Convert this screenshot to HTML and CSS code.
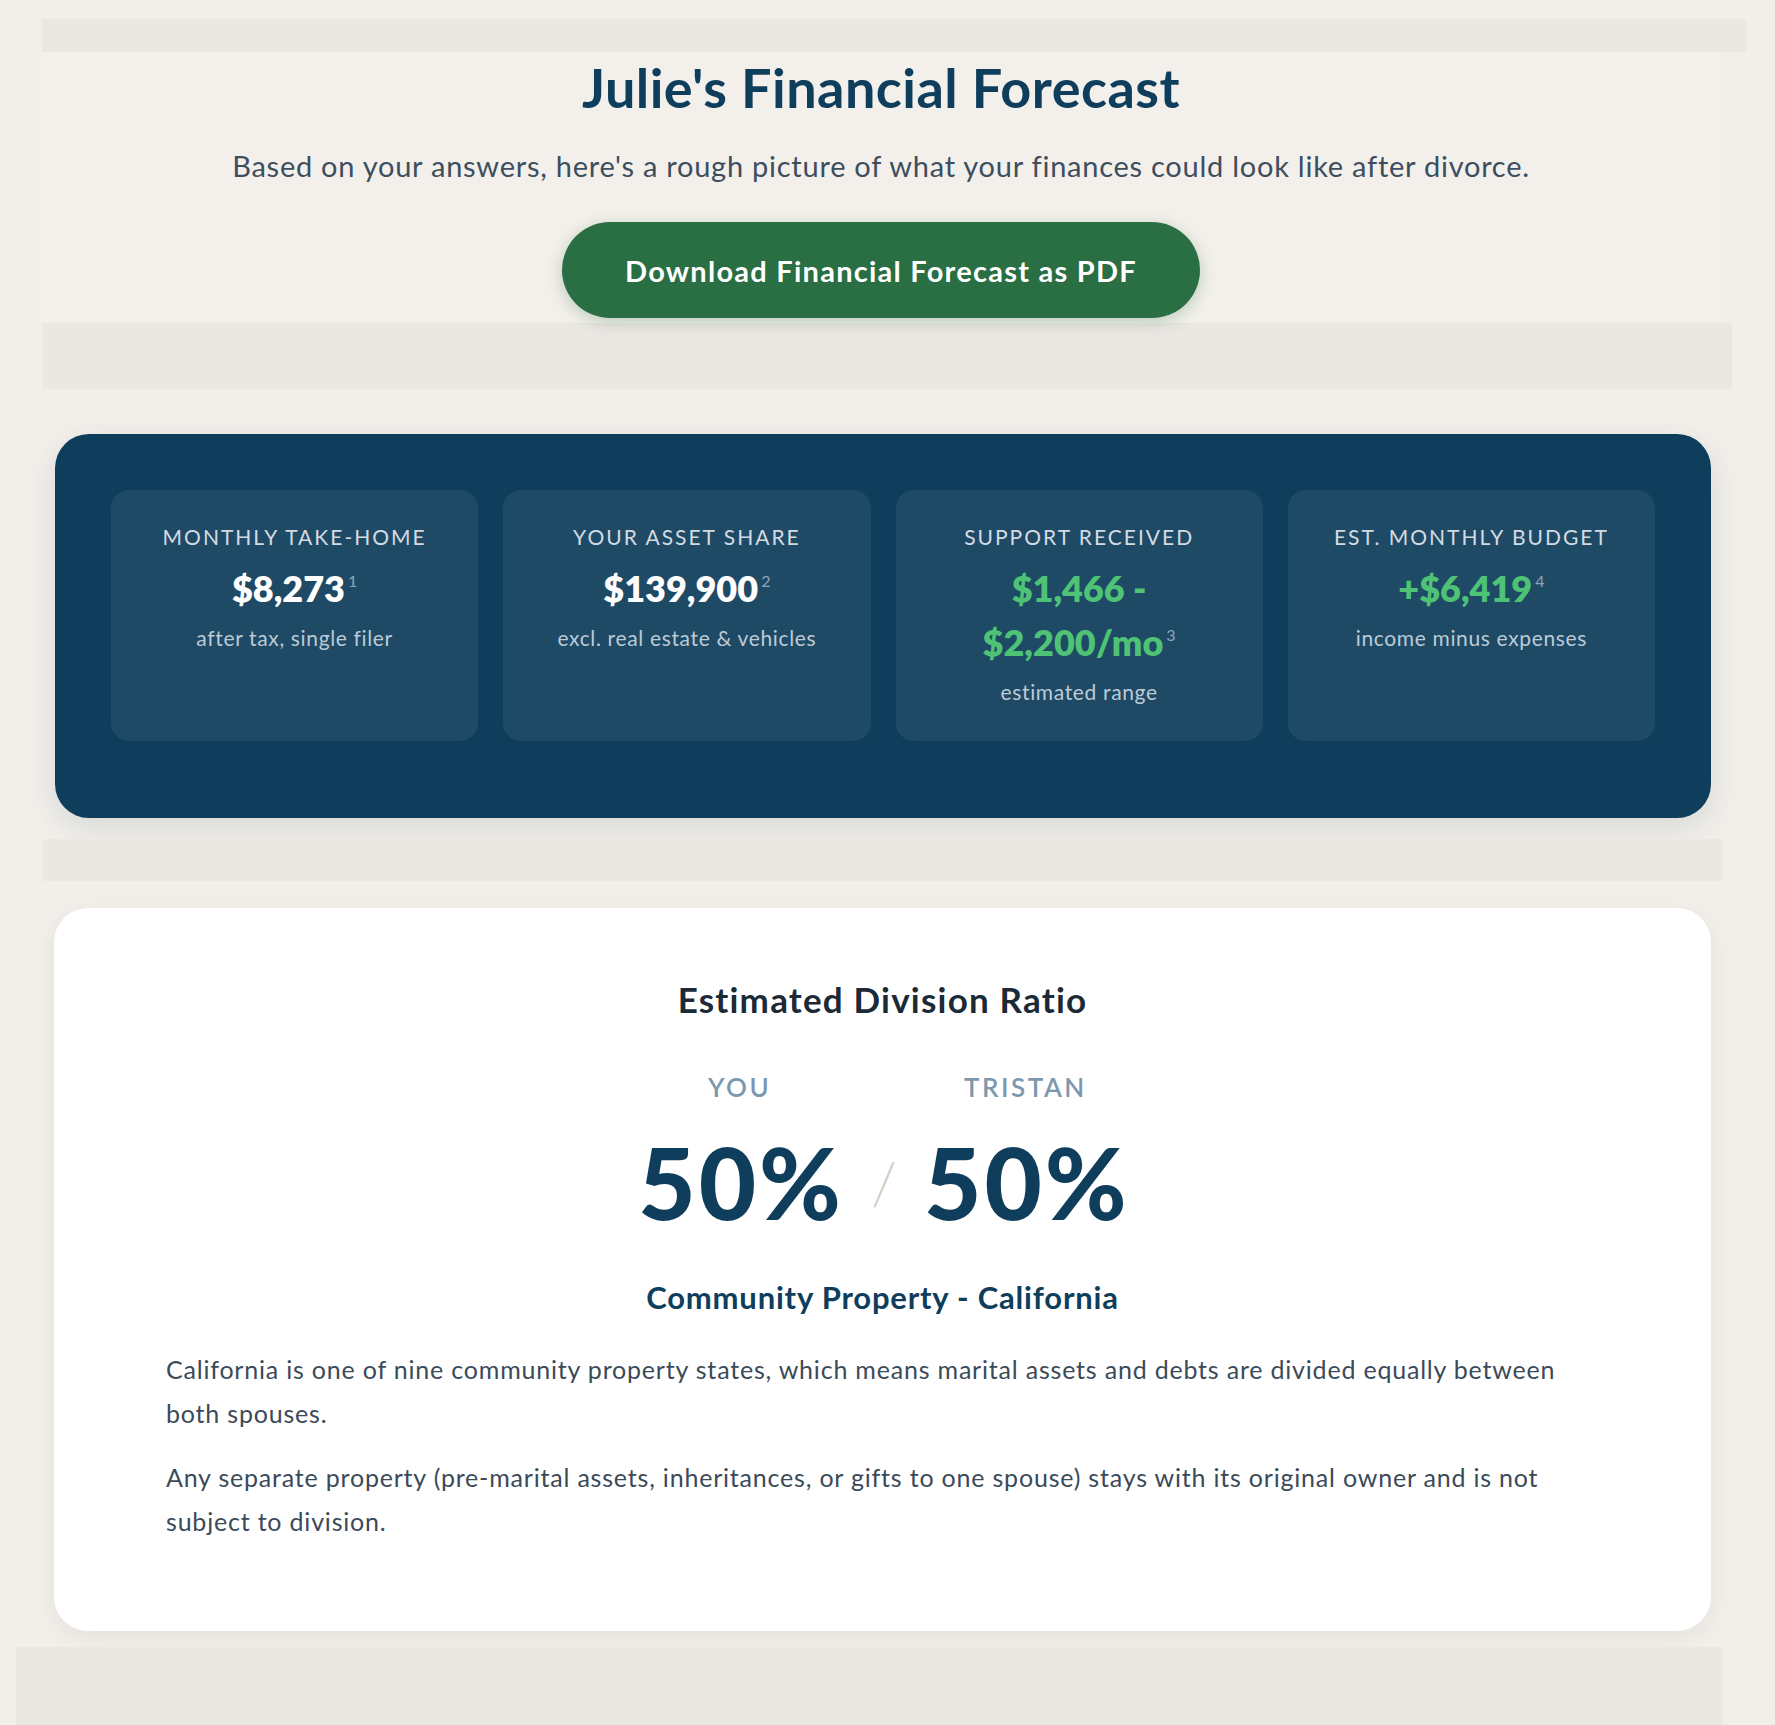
FILE: index.html
```html
<!DOCTYPE html>
<html lang="en">
<head>
<meta charset="utf-8">
<title>Julie's Financial Forecast</title>
<link rel="stylesheet" href="styles.css">
</head>
<body>
<div class="page">
  <div class="band band-top"></div>
  <header class="hero">
    <h1 class="hero-title">Julie's Financial Forecast</h1>
    <p class="hero-sub">Based on your answers, here's a rough picture of what your finances could look like after divorce.</p>
    <button class="pdf-btn" type="button">Download Financial Forecast as PDF</button>
  </header>
  <div class="band band-mid"></div>

  <section class="stats">
    <div class="stat">
      <div class="stat-label">Monthly Take-Home</div>
      <div class="stat-value">$8,273<sup class="fn">1</sup></div>
      <div class="stat-note">after tax, single filer</div>
    </div>
    <div class="stat">
      <div class="stat-label">Your Asset Share</div>
      <div class="stat-value">$139,900<sup class="fn">2</sup></div>
      <div class="stat-note">excl. real estate &amp; vehicles</div>
    </div>
    <div class="stat">
      <div class="stat-label">Support Received</div>
      <div class="stat-value stat-value--green">$1,466 -<br>$2,200/mo<sup class="fn">3</sup></div>
      <div class="stat-note">estimated range</div>
    </div>
    <div class="stat">
      <div class="stat-label">Est. Monthly Budget</div>
      <div class="stat-value stat-value--green">+$6,419<sup class="fn">4</sup></div>
      <div class="stat-note">income minus expenses</div>
    </div>
  </section>

  <div class="band band-low"></div>

  <section class="ratio-card">
    <h2 class="ratio-title">Estimated Division Ratio</h2>
    <div class="ratio-row">
      <div class="ratio-col">
        <div class="ratio-label">You</div>
        <div class="ratio-num">50%</div>
      </div>
      <div class="ratio-slash">/</div>
      <div class="ratio-col">
        <div class="ratio-label">Tristan</div>
        <div class="ratio-num">50%</div>
      </div>
    </div>
    <h3 class="ratio-rule">Community Property - California</h3>
    <div class="ratio-body">
      <p class="ratio-text">California is one of nine community property states, which means marital assets and debts are divided equally between both spouses.</p>
      <p class="ratio-text">Any separate property (pre-marital assets, inheritances, or gifts to one spouse) stays with its original owner and is not subject to division.</p>
    </div>
  </section>

  <div class="band band-bottom"></div>
</div>
</body>
</html>
```

FILE: styles.css
```css
* {
  box-sizing: border-box;
}

html, body {
  margin: 0;
  padding: 0;
}

body {
  background: #f2efea;
  font-family: "Lato", "Noto Sans", "DejaVu Sans", sans-serif;
  color: #3b4a59;
}

.page {
  width: 1775px;
  height: 1725px;
  overflow: hidden;
}

.band {
  background: #ebe7e3;
}

.band-top {
  margin: 19px 0 0 42px;
  width: 1704px;
  height: 33px;
}

.hero {
  margin-left: 43px;
  width: 1676px;
  display: flex;
  flex-direction: column;
  align-items: center;
  text-align: center;
  background: #f3f0eb;
  padding-top: 5px;
  padding-bottom: 5px;
}

.hero-title {
  margin: 0;
  font-size: 54px;
  line-height: 62px;
  font-weight: 700;
  color: #0f3d5c;
  letter-spacing: 0.45px;
}

.hero-sub {
  margin: 27px 0 0;
  font-size: 29px;
  line-height: 40px;
  letter-spacing: 0.75px;
  color: #3d4e5e;
}

.pdf-btn {
  margin-top: 36px;
  height: 96px;
  padding: 0 63px;
  border: none;
  border-radius: 48px;
  background: #2a6e43;
  color: #ffffff;
  font-family: inherit;
  font-size: 29px;
  font-weight: 700;
  letter-spacing: 1.25px;
  box-shadow: 0 4px 16px rgba(42, 110, 67, 0.28);
}

.band-mid {
  margin-left: 43px;
  width: 1689px;
  height: 66px;
}

.stats {
  margin: 45px 0 0 55px;
  width: 1656px;
  padding: 56px 56px 77px;
  background: #0f3d5c;
  border-radius: 34px;
  box-shadow: 0 10px 30px rgba(15, 61, 92, 0.12);
  display: grid;
  grid-template-columns: repeat(4, 1fr);
  gap: 25px;
}

.stat {
  background: #1f4a66;
  border-radius: 18px;
  padding: 32px 16px 34px;
  text-align: center;
  min-height: 251px;
}

.stat-label {
  font-size: 21px;
  line-height: 30px;
  letter-spacing: 2px;
  text-transform: uppercase;
  color: #d3dbe2;
}

.stat-value {
  margin-top: 9px;
  font-size: 36px;
  line-height: 54px;
  font-weight: 800;
  color: #ffffff;
}

.stat-value--green {
  color: #4ec375;
}

.fn {
  font-size: 16px;
  font-weight: 400;
  color: #8ea5b8;
  margin-left: 3px;
  vertical-align: 15px;
  line-height: 0;
}

.stat-note {
  margin-top: 8px;
  font-size: 21px;
  line-height: 30px;
  letter-spacing: 0.65px;
  color: #bccad6;
}

.band-low {
  margin: 21px 0 0 43px;
  width: 1680px;
  height: 42px;
}

.ratio-card {
  margin: 27px 0 0 54px;
  width: 1657px;
  height: 723px;
  background: #ffffff;
  border-radius: 34px;
  box-shadow: 0 6px 24px rgba(0, 0, 0, 0.06);
  padding: 70px 112px 88px;
  display: flex;
  flex-direction: column;
  align-items: center;
}

.ratio-title {
  margin: 0;
  font-size: 35px;
  line-height: 43px;
  font-weight: 700;
  letter-spacing: 1.2px;
  color: #1b2a36;
}

.ratio-row {
  margin-top: 47px;
  display: flex;
  align-items: flex-end;
}

.ratio-col {
  display: flex;
  flex-direction: column;
  align-items: center;
}

.ratio-label {
  font-size: 26px;
  line-height: 39px;
  letter-spacing: 2.5px;
  text-transform: uppercase;
  color: #7b98ae;
  font-weight: 600;
}

.ratio-num {
  margin-top: 27px;
  margin-right: -3px;
  font-size: 99px;
  line-height: 96px;
  font-weight: 900;
  letter-spacing: 3px;
  color: #0f3d5c;
}

.ratio-slash {
  font-size: 60px;
  line-height: 96px;
  font-weight: 300;
  color: #d6cfc5;
  margin: 0 27px 0 30px;
}

.ratio-rule {
  margin: 48px 0 0;
  font-size: 31px;
  line-height: 39px;
  font-weight: 700;
  letter-spacing: 0.8px;
  color: #0f3d5c;
}

.ratio-body {
  align-self: flex-start;
  width: 1415px;
  margin-top: 30px;
}

.ratio-text {
  margin: 0;
  font-size: 25px;
  line-height: 44px;
  letter-spacing: 0.8px;
  color: #3b4a59;
}

.ratio-text + .ratio-text {
  margin-top: 20px;
}

.band-bottom {
  margin: 16px 0 0 16px;
  width: 1707px;
  height: 78px;
}
```
